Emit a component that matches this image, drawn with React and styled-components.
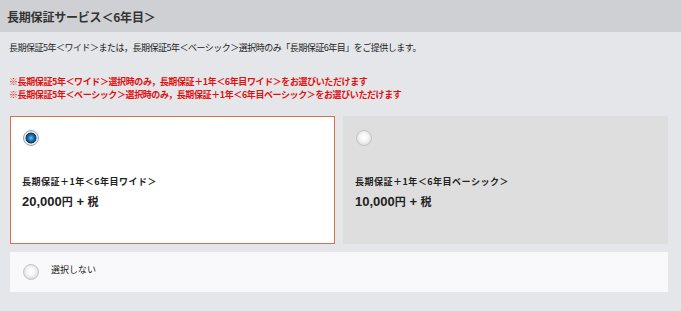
import React, { useState } from "react";
import styled, { createGlobalStyle, css } from "styled-components";

const Global = createGlobalStyle`
  html, body { margin: 0; padding: 0; background: #e4e6ea; }
  body {
    font-family: "Noto Sans CJK JP", "Liberation Sans", sans-serif;
    color: #222;
  }
  * { box-sizing: border-box; }
`;

const Page = styled.div`
  width: 681px;
  min-height: 311px;
  background: #e4e6ea;
`;

const Header = styled.h2`
  margin: 0;
  height: 32px;
  background: #cfd0d3;
  padding-left: 7px;
  display: flex;
  align-items: center;
  font-size: 12px;
  font-weight: 700;
  letter-spacing: -0.2px;
  color: #333;
`;

const Body = styled.div`
  padding: 9px 13px 0 10px;
`;

const Desc = styled.p`
  margin: 0 0 0 -1px;
  font-size: 9px;
  line-height: 14px;
  letter-spacing: -0.5px;
  color: #222;
`;

const Notes = styled.div`
  margin: 20px 0 0 -1px;
  font-size: 9px;
  line-height: 13px;
  font-weight: 700;
  letter-spacing: -0.4px;
  color: #e0100f;
`;

const Cards = styled.div`
  margin-top: 15px;
  display: grid;
  grid-template-columns: 325px 325px;
  column-gap: 8px;
`;

const Card = styled.label`
  height: 128px;
  padding: 13px 11px;
  display: flex;
  flex-direction: column;
  align-items: flex-start;
  cursor: pointer;
  ${({ $selected }) =>
    $selected
      ? css`
          background: #ffffff;
          border: 1px solid #d6714f;
        `
      : css`
          background: #dedede;
          border: 1px solid #dedede;
        `}
`;

const Radio = styled.span`
  display: inline-block;
  width: 16px;
  height: 16px;
  border-radius: 50%;
  flex: none;
  margin-left: ${({ $ml }) => $ml || 0}px;
  ${({ $checked }) =>
    $checked
      ? css`
          border: 1px solid #9aa3aa;
          background: radial-gradient(
            circle at 50% 50%,
            #7cc4ec 0,
            #2b86c3 2px,
            #0f5a93 4px,
            #0b3352 5.2px,
            #f4f4f4 5.8px,
            #e6e6e6 7px
          );
        `
      : css`
          border: 1px solid #c3c3c3;
          background: radial-gradient(
            circle at 50% 45%,
            #ffffff 0,
            #f6f6f6 4px,
            #e2e2e2 7px
          );
        `}
`;

const Title = styled.div`
  margin-top: 29px;
  font-size: 9px;
  line-height: 14px;
  font-weight: 700;
  letter-spacing: 0.5px;
  color: #222;
`;

const Price = styled.div`
  margin-top: 3px;
  font-family: "Liberation Sans", "Noto Sans CJK JP", sans-serif;
  font-size: 13px;
  line-height: 18px;
  font-weight: 700;
  color: #222;
`;

const Yen = styled.span`
  font-family: "Noto Sans CJK JP", sans-serif;
  font-size: 11px;
`;

const NoneRow = styled.label`
  margin-top: 8px;
  height: 40px;
  background: #f9f9fb;
  display: flex;
  align-items: center;
  padding-left: 13px;
  gap: 12px;
  cursor: pointer;
`;

const NoneText = styled.span`
  font-size: 9px;
  line-height: 12px;
  margin-top: -4px;
  color: #222;
`;

const options = [
  { id: "wide", title: "長期保証＋1年＜6年目ワイド＞", price: "20,000" },
  { id: "basic", title: "長期保証＋1年＜6年目ベーシック＞", price: "10,000" },
];

export default function App() {
  const [sel, setSel] = useState("wide");
  return (
    <Page>
      <Global />
      <Header>長期保証サービス＜6年目＞</Header>
      <Body>
        <Desc>
          長期保証5年＜ワイド＞または，長期保証5年＜ベーシック＞選択時のみ「長期保証6年目」をご提供します。
        </Desc>
        <Notes>
          <div>※長期保証5年＜ワイド＞選択時のみ，長期保証＋1年＜6年目ワイド＞をお選びいただけます</div>
          <div>※長期保証5年＜ベーシック＞選択時のみ，長期保証＋1年＜6年目ベーシック＞をお選びいただけます</div>
        </Notes>
        <Cards>
          {options.map((o) => (
            <Card key={o.id} $selected={sel === o.id} onClick={() => setSel(o.id)}>
              <Radio $checked={sel === o.id} $ml={1} />
              <Title>{o.title}</Title>
              <Price>
                {o.price}
                <Yen>円</Yen> + <Yen>税</Yen>
              </Price>
            </Card>
          ))}
        </Cards>
        <NoneRow onClick={() => setSel("none")}>
          <Radio $checked={sel === "none"} />
          <NoneText>選択しない</NoneText>
        </NoneRow>
      </Body>
    </Page>
  );
}
